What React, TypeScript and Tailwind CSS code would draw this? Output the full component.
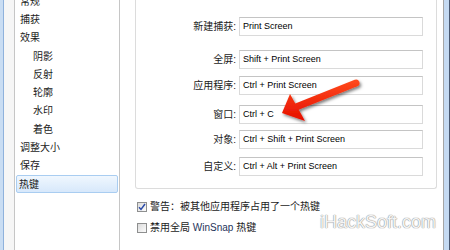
import React from "react"

// Liste links: Einträge des Einstellungsdialogs
const items = [
  { label: "常规", indent: false },
  { label: "捕获", indent: false },
  { label: "效果", indent: false },
  { label: "阴影", indent: true },
  { label: "反射", indent: true },
  { label: "轮廓", indent: true },
  { label: "水印", indent: true },
  { label: "着色", indent: true },
  { label: "调整大小", indent: false },
  { label: "保存", indent: false },
  { label: "热键", indent: false, selected: true },
]

const hotkeys = [
  { label: "新建捕获:", value: "Print Screen", mt: "mt-0" },
  { label: "全屏:", value: "Shift + Print Screen", mt: "mt-[14px]" },
  { label: "应用程序:", value: "Ctrl + Print Screen", mt: "mt-[7px]" },
  { label: "窗口:", value: "Ctrl + C", mt: "mt-[10px]" },
  { label: "对象:", value: "Ctrl + Shift + Print Screen", mt: "mt-[6px]" },
  { label: "自定义:", value: "Ctrl + Alt + Print Screen", mt: "mt-[8px]" },
]

function CheckBox({ checked }: { checked?: boolean }) {
  return (
    <div className="w-[10px] h-[10px] border border-[#8e8f8f] bg-gradient-to-br from-[#dcdcdc] to-[#fbfbfb] flex items-center justify-center shrink-0">
      {checked && (
        <svg width="8" height="8" viewBox="0 0 8 8">
          <path d="M1 4.2 L3 6.4 L7 1" fill="none" stroke="#2a4aa8" strokeWidth="1.5" />
        </svg>
      )}
    </div>
  )
}

function Arrow() {
  return (
    <svg className="absolute left-0 top-0 pointer-events-none" width="450" height="250">
      <defs>
        <linearGradient id="arrowFill" x1="0" y1="80" x2="0" y2="120" gradientUnits="userSpaceOnUse">
          <stop offset="0" stopColor="#ff4a1c" />
          <stop offset="1" stopColor="#e60f00" />
        </linearGradient>
        <filter id="arrowShadow" x="-20%" y="-20%" width="150%" height="160%">
          <feDropShadow dx="1.5" dy="2" stdDeviation="1.5" floodColor="#000" floodOpacity="0.5" />
        </filter>
      </defs>
      <g filter="url(#arrowShadow)">
        <line x1="296" y1="107" x2="356" y2="83" stroke="url(#arrowFill)" strokeWidth="7" strokeLinecap="round" />
        <polygon points="282,113 290,94 305,121" fill="url(#arrowFill)" />
      </g>
    </svg>
  )
}

export default function App() {
  return (
    <div className="relative w-[450px] h-[250px] overflow-hidden flex bg-white text-[10px] text-[#1b1b1b] font-['Liberation_Sans','Noto_Sans_CJK_SC',sans-serif]">
      {/* linker Fensterrand */}
      <div className="w-[3px] bg-[#c9ddf3]" />
      <div className="w-px bg-[#8fb2dc]" />
      <div className="w-[10px] bg-[#f6f6f6]" />

      {/* Kategorienliste */}
      <div className="w-[106px] border-x border-[#c6c6c6] bg-white overflow-hidden">
        <div className="-mt-[8px] px-px">
          {items.map((it) => (
            <div
              key={it.label}
              className={
                "h-[18.3px] flex items-center rounded-[2px] " +
                (it.selected
                  ? "border border-[#a9cdf1] bg-gradient-to-b from-[#f0f7fe] to-[#d7e8fb] pl-[2px]"
                  : it.indent
                    ? "pl-[17px]"
                    : "pl-[4px]")
              }
            >
              {it.label}
            </div>
          ))}
        </div>
      </div>

      {/* Inhalt rechts */}
      <div className="relative flex-1 flex flex-col">
        <div className="ml-[15px] w-[302px] border-x border-b border-[#dcdcdc] rounded-b-[3px] pt-[17px] pb-[12px] flex flex-col">
          {hotkeys.map((h) => (
            <div key={h.label} className={"flex items-center " + h.mt}>
              <div className="w-[101px] text-right pr-[1px]">{h.label}</div>
              <div className="ml-[2px] w-[184px] h-[19px] border border-[#dadada] border-t-[#c4c4c4] flex items-center px-[3px] text-[9px] text-black">
                {h.value}
              </div>
            </div>
          ))}
        </div>

        <div className="mt-[10px] ml-[17px] flex flex-col gap-[6px]">
          <div className="flex items-center gap-[3px]">
            <CheckBox checked />
            <span>警告：被其他应用程序占用了一个热键</span>
          </div>
          <div className="flex items-center gap-[3px]">
            <CheckBox />
            <span>
              禁用全局 <span className="text-[#26345a]">WinSnap</span> 热键
            </span>
          </div>
        </div>

        <div className="absolute left-[200px] top-[213px] text-[18px] leading-none text-[#f4f4f4] font-['Liberation_Sans',sans-serif] [text-shadow:0_0_1px_#8a8a8a,0_0_1px_#8a8a8a]">
          iHackSoft.com
        </div>
      </div>

      {/* rechter Fensterrand */}
      <div className="w-px bg-[#a5a5a5]" />
      <div className="w-[5px] bg-[#c5daf2]" />
      <div className="w-px bg-[#4a5870]" />

      <Arrow />
    </div>
  )
}
